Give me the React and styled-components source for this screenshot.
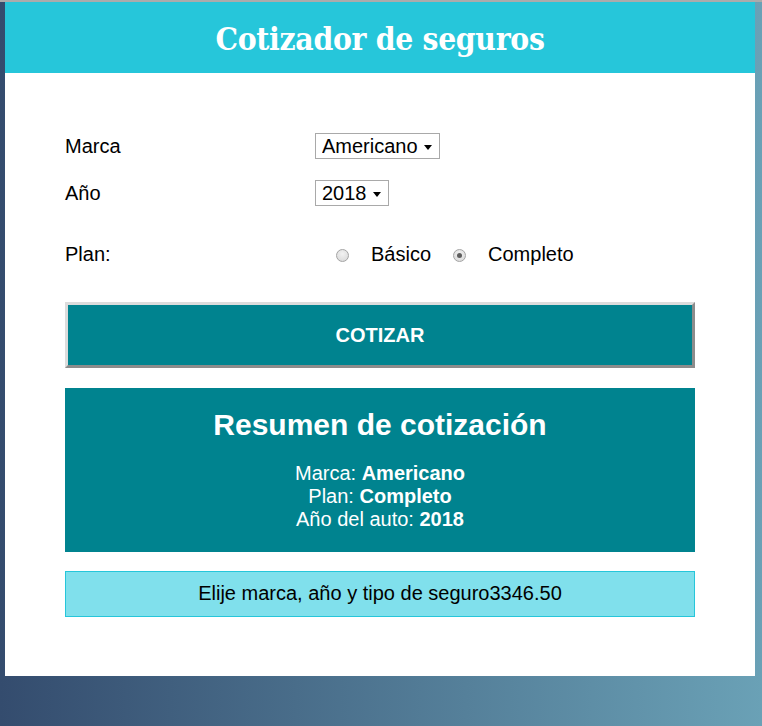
import React from "react";
import styled, { createGlobalStyle } from "styled-components";

const GlobalStyle = createGlobalStyle`
  html {
    background: linear-gradient(to right, #344c6e 0%, #6aa1b6 100%);
    min-height: 100%;
  }
  body {
    margin: 0;
    border-top: 2px solid #ababab;
    font-family: "Liberation Sans", Arial, sans-serif;
    color: #000;
  }
`;

const Container = styled.div`
  width: 750px;
  margin-left: 5px;
  background: #fff;
`;

const Header = styled.header`
  height: 71px;
  background: #26c6da;
  display: flex;
  align-items: center;
  justify-content: center;
`;

const Title = styled.h1`
  margin: 2px 0 0;
  color: #fff;
  font-family: "DejaVu Serif", "Liberation Serif", serif;
  font-stretch: condensed;
  font-weight: bold;
  font-size: 31.5px;
  letter-spacing: -0.3px;
`;

const Body = styled.div`
  padding: 60px 60px 59px;
`;

const Field = styled.div`
  display: flex;
  align-items: center;
  height: 26px;
  margin-bottom: ${(p) => p.$mb || 0}px;
  font-size: 20px;
`;

const Label = styled.label`
  flex: 0 0 250px;
`;

const SelectWrap = styled.span`
  position: relative;
  display: inline-block;
  &::after {
    content: "";
    position: absolute;
    right: 8px;
    top: 12px;
    border-left: 4px solid transparent;
    border-right: 4px solid transparent;
    border-top: 5px solid #000;
    pointer-events: none;
  }
`;

const Select = styled.select`
  appearance: none;
  -webkit-appearance: none;
  height: 26px;
  box-sizing: border-box;
  border: 1px solid #a9a9a9;
  border-radius: 0;
  background: #fff;
  padding: 0 21px 0 6px;
  font-family: "Liberation Sans", Arial, sans-serif;
  font-size: 20px;
  color: #000;
  line-height: 23px;
`;

const RadioGroup = styled.div`
  display: flex;
  align-items: center;
  gap: 22px;
  padding-left: 21px;
`;

const Radio = styled.input`
  appearance: none;
  -webkit-appearance: none;
  margin: 2px 0 0;
  width: 13px;
  height: 13px;
  box-sizing: border-box;
  border-radius: 50%;
  border: 1px solid #a4a4a4;
  background: radial-gradient(circle at 50% 35%, #f2f2f2 0%, #d6d6d6 100%);
  position: relative;
  &:checked::after {
    content: "";
    position: absolute;
    left: 3px;
    top: 3px;
    width: 5px;
    height: 5px;
    border-radius: 50%;
    background: #5e5e5e;
  }
`;

const RadioLabel = styled.label``;

const Button = styled.button`
  display: block;
  width: 100%;
  height: 66px;
  box-sizing: border-box;
  background: #00838f;
  border: 3px solid;
  border-color: #dcdcdc #8c8c8c #8c8c8c #dcdcdc;
  color: #fff;
  font-family: "Liberation Sans", Arial, sans-serif;
  font-weight: bold;
  font-size: 20px;
  text-transform: uppercase;
  cursor: pointer;
`;

const Summary = styled.div`
  margin-top: 20px;
  background: #00838f;
  color: #fff;
  text-align: center;
  padding: 20px 20px 21px;
`;

const SummaryTitle = styled.h2`
  margin: 0 0 20px;
  font-size: 30px;
  font-weight: bold;
`;

const SummaryLine = styled.p`
  margin: 0;
  font-size: 20px;
  line-height: 23px;
`;

const Result = styled.div`
  margin-top: 19px;
  background: #80e0ec;
  border: 1px solid #26c6da;
  text-align: center;
  font-size: 20px;
  line-height: 23px;
  padding: 10px 10px 11px;
`;

export default function App() {
  return (
    <>
      <GlobalStyle />
      <Container>
        <Header>
          <Title>Cotizador de seguros</Title>
        </Header>
        <Body>
          <Field $mb={21}>
            <Label>Marca</Label>
            <SelectWrap>
              <Select defaultValue="americano">
                <option value="americano">Americano</option>
                <option value="europeo">Europeo</option>
                <option value="asiatico">Asiático</option>
              </Select>
            </SelectWrap>
          </Field>
          <Field $mb={35}>
            <Label>Año</Label>
            <SelectWrap>
              <Select defaultValue="2018">
                <option value="2018">2018</option>
                <option value="2017">2017</option>
                <option value="2016">2016</option>
              </Select>
            </SelectWrap>
          </Field>
          <Field $mb={35}>
            <Label>Plan:</Label>
            <RadioGroup>
              <Radio type="radio" name="plan" value="basico" />
              <RadioLabel>Básico</RadioLabel>
              <Radio type="radio" name="plan" value="completo" defaultChecked />
              <RadioLabel>Completo</RadioLabel>
            </RadioGroup>
          </Field>
          <Button>Cotizar</Button>
          <Summary>
            <SummaryTitle>Resumen de cotización</SummaryTitle>
            <SummaryLine>
              Marca: <b>Americano</b>
            </SummaryLine>
            <SummaryLine>
              Plan: <b>Completo</b>
            </SummaryLine>
            <SummaryLine>
              Año del auto: <b>2018</b>
            </SummaryLine>
          </Summary>
          <Result>Elije marca, año y tipo de seguro3346.50</Result>
        </Body>
      </Container>
    </>
  );
}
